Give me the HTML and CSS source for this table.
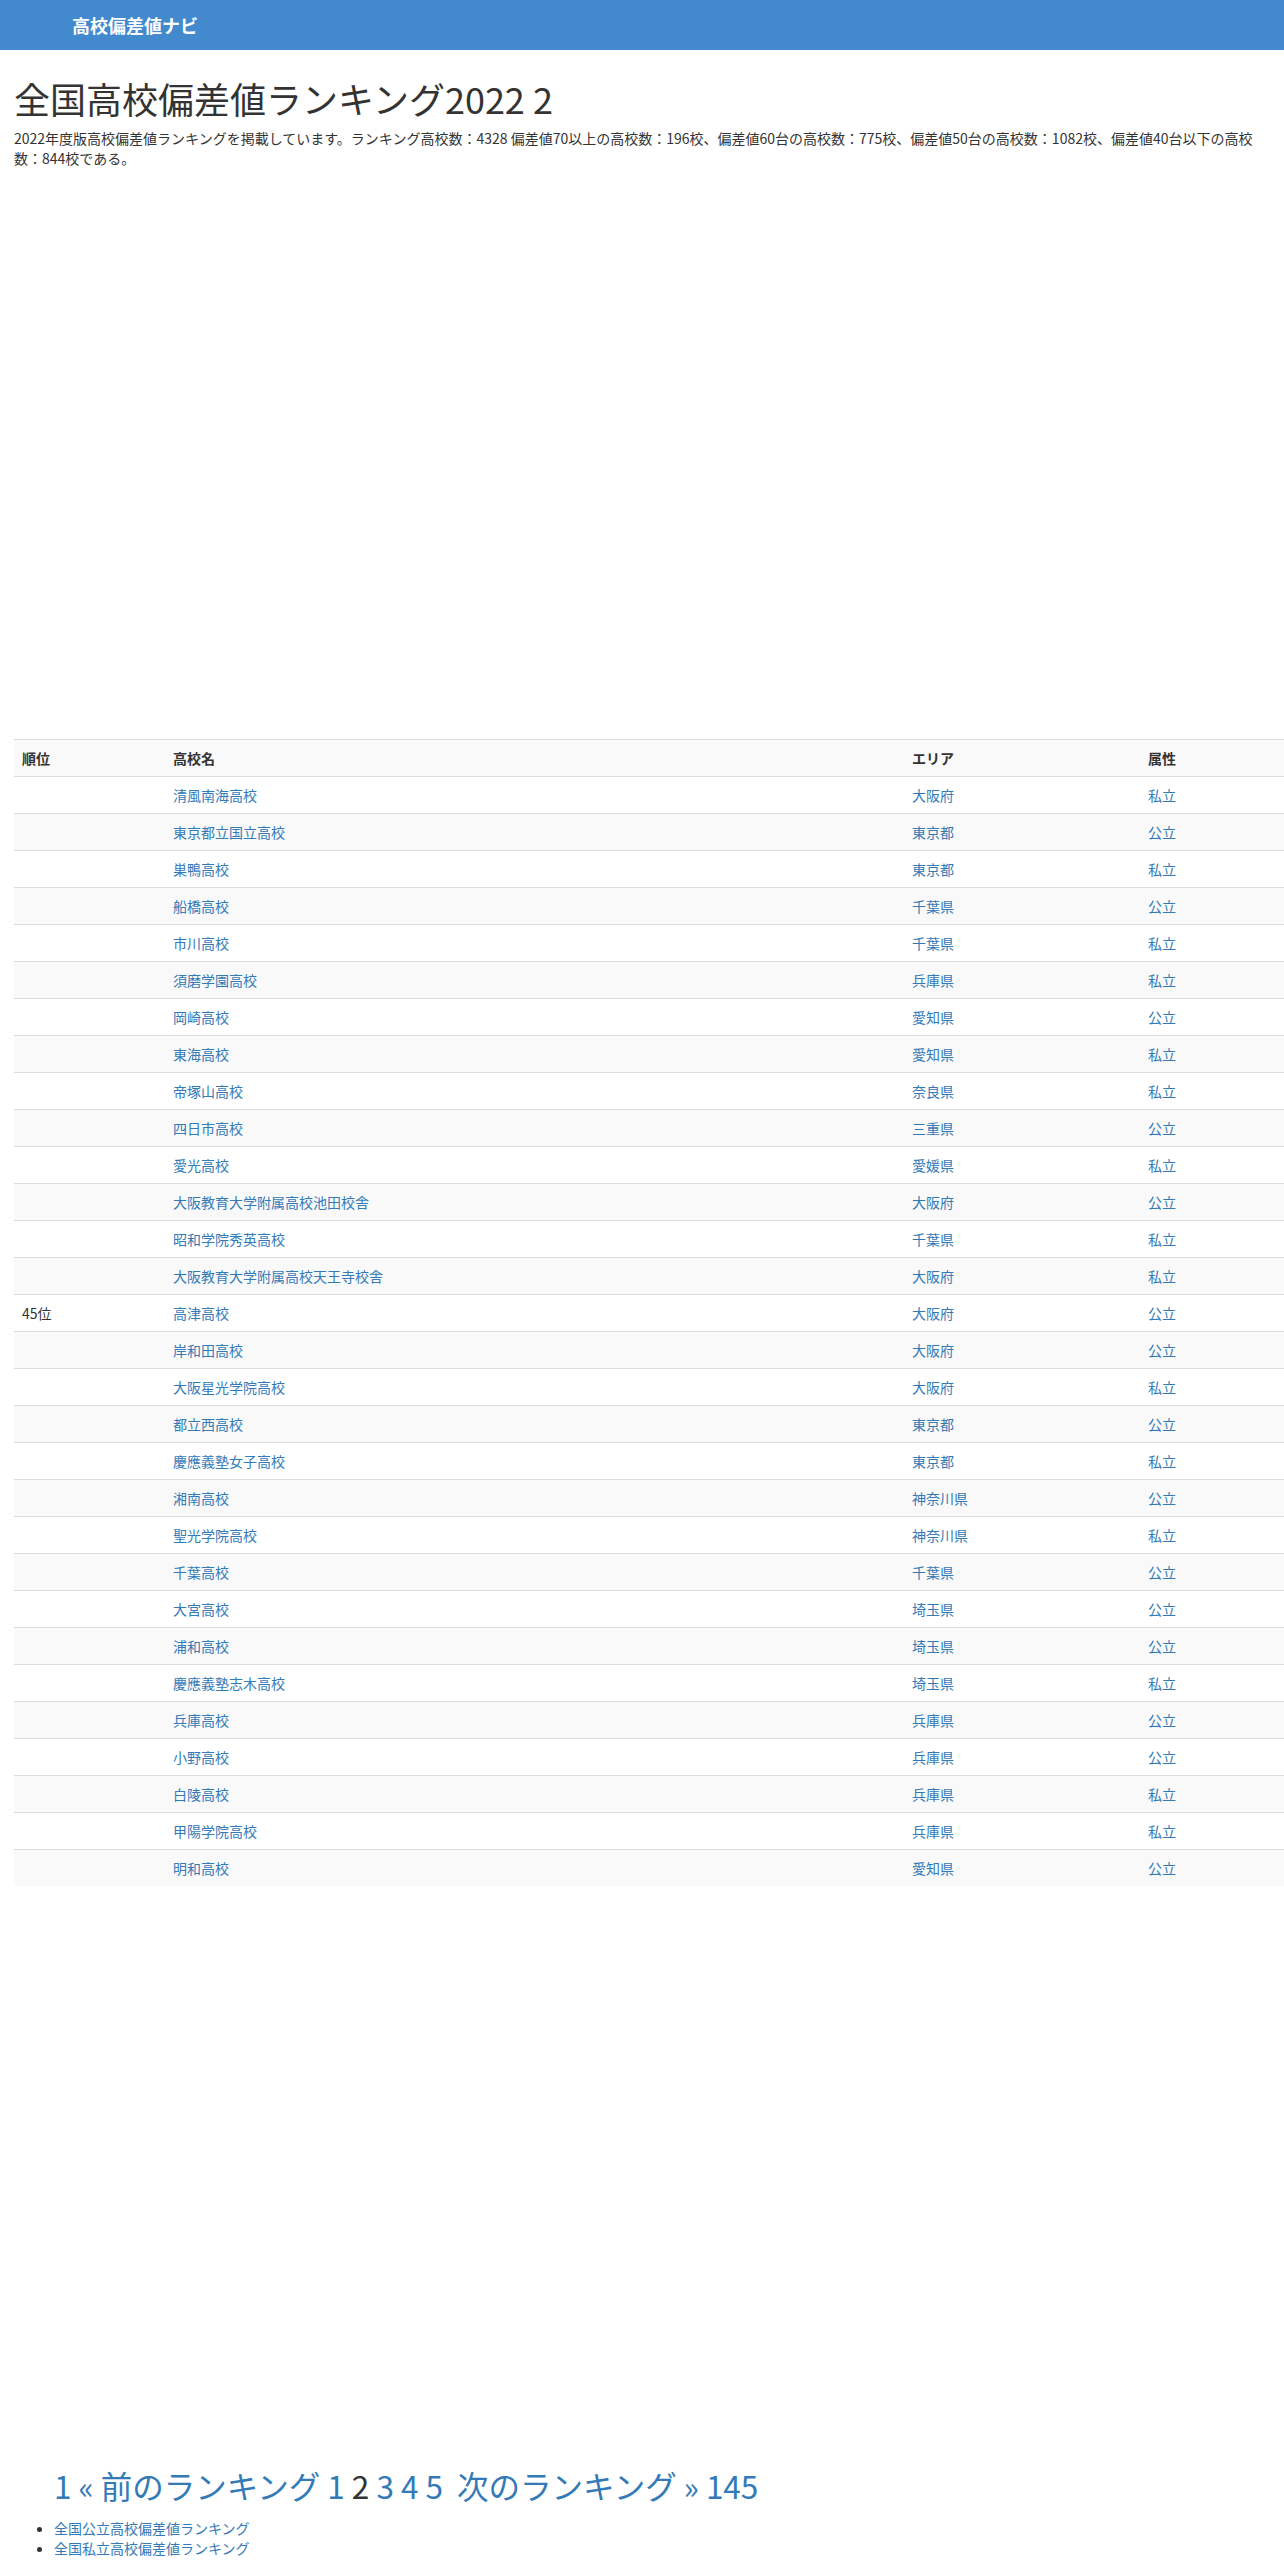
FILE: index.html
```html
<!DOCTYPE html>
<html lang="ja">
<head>
<meta charset="utf-8">
<title>全国高校偏差値ランキング2022 2</title>
<link rel="stylesheet" href="styles.css">
</head>
<body>
<header class="navbar">
  <a class="brand" href="#">高校偏差値ナビ</a>
</header>
<main class="content">
  <h1 class="title">全国高校偏差値ランキング2022 2</h1>
  <p class="lead">2022年度版高校偏差値ランキングを掲載しています。ランキング高校数：4328 偏差値70以上の高校数：196校、偏差値60台の高校数：775校、偏差値50台の高校数：1082校、偏差値40台以下の高校数：844校である。</p>
  <div class="ad ad-top"></div>
  <table class="ranking">
    <tbody>
      <tr><th class="c-rank">順位</th><th class="c-name">高校名</th><th class="c-area">エリア</th><th class="c-type">属性</th></tr>
      <tr><td></td><td><a href="#">清風南海高校</a></td><td><a href="#">大阪府</a></td><td><a href="#">私立</a></td></tr>
      <tr><td></td><td><a href="#">東京都立国立高校</a></td><td><a href="#">東京都</a></td><td><a href="#">公立</a></td></tr>
      <tr><td></td><td><a href="#">巣鴨高校</a></td><td><a href="#">東京都</a></td><td><a href="#">私立</a></td></tr>
      <tr><td></td><td><a href="#">船橋高校</a></td><td><a href="#">千葉県</a></td><td><a href="#">公立</a></td></tr>
      <tr><td></td><td><a href="#">市川高校</a></td><td><a href="#">千葉県</a></td><td><a href="#">私立</a></td></tr>
      <tr><td></td><td><a href="#">須磨学園高校</a></td><td><a href="#">兵庫県</a></td><td><a href="#">私立</a></td></tr>
      <tr><td></td><td><a href="#">岡崎高校</a></td><td><a href="#">愛知県</a></td><td><a href="#">公立</a></td></tr>
      <tr><td></td><td><a href="#">東海高校</a></td><td><a href="#">愛知県</a></td><td><a href="#">私立</a></td></tr>
      <tr><td></td><td><a href="#">帝塚山高校</a></td><td><a href="#">奈良県</a></td><td><a href="#">私立</a></td></tr>
      <tr><td></td><td><a href="#">四日市高校</a></td><td><a href="#">三重県</a></td><td><a href="#">公立</a></td></tr>
      <tr><td></td><td><a href="#">愛光高校</a></td><td><a href="#">愛媛県</a></td><td><a href="#">私立</a></td></tr>
      <tr><td></td><td><a href="#">大阪教育大学附属高校池田校舎</a></td><td><a href="#">大阪府</a></td><td><a href="#">公立</a></td></tr>
      <tr><td></td><td><a href="#">昭和学院秀英高校</a></td><td><a href="#">千葉県</a></td><td><a href="#">私立</a></td></tr>
      <tr><td></td><td><a href="#">大阪教育大学附属高校天王寺校舎</a></td><td><a href="#">大阪府</a></td><td><a href="#">私立</a></td></tr>
      <tr><td>45位</td><td><a href="#">高津高校</a></td><td><a href="#">大阪府</a></td><td><a href="#">公立</a></td></tr>
      <tr><td></td><td><a href="#">岸和田高校</a></td><td><a href="#">大阪府</a></td><td><a href="#">公立</a></td></tr>
      <tr><td></td><td><a href="#">大阪星光学院高校</a></td><td><a href="#">大阪府</a></td><td><a href="#">私立</a></td></tr>
      <tr><td></td><td><a href="#">都立西高校</a></td><td><a href="#">東京都</a></td><td><a href="#">公立</a></td></tr>
      <tr><td></td><td><a href="#">慶應義塾女子高校</a></td><td><a href="#">東京都</a></td><td><a href="#">私立</a></td></tr>
      <tr><td></td><td><a href="#">湘南高校</a></td><td><a href="#">神奈川県</a></td><td><a href="#">公立</a></td></tr>
      <tr><td></td><td><a href="#">聖光学院高校</a></td><td><a href="#">神奈川県</a></td><td><a href="#">私立</a></td></tr>
      <tr><td></td><td><a href="#">千葉高校</a></td><td><a href="#">千葉県</a></td><td><a href="#">公立</a></td></tr>
      <tr><td></td><td><a href="#">大宮高校</a></td><td><a href="#">埼玉県</a></td><td><a href="#">公立</a></td></tr>
      <tr><td></td><td><a href="#">浦和高校</a></td><td><a href="#">埼玉県</a></td><td><a href="#">公立</a></td></tr>
      <tr><td></td><td><a href="#">慶應義塾志木高校</a></td><td><a href="#">埼玉県</a></td><td><a href="#">私立</a></td></tr>
      <tr><td></td><td><a href="#">兵庫高校</a></td><td><a href="#">兵庫県</a></td><td><a href="#">公立</a></td></tr>
      <tr><td></td><td><a href="#">小野高校</a></td><td><a href="#">兵庫県</a></td><td><a href="#">公立</a></td></tr>
      <tr><td></td><td><a href="#">白陵高校</a></td><td><a href="#">兵庫県</a></td><td><a href="#">私立</a></td></tr>
      <tr><td></td><td><a href="#">甲陽学院高校</a></td><td><a href="#">兵庫県</a></td><td><a href="#">私立</a></td></tr>
      <tr><td></td><td><a href="#">明和高校</a></td><td><a href="#">愛知県</a></td><td><a href="#">公立</a></td></tr>
    </tbody>
  </table>
  <div class="ad ad-bottom"></div>
  <nav class="pager">
    <a href="#">1</a> <a href="#">« 前のランキング</a> <a href="#">1</a> <span class="current">2</span> <a href="#">3</a> <a href="#">4</a> <a href="#">5</a>&nbsp; <a href="#">次のランキング »</a> <a href="#">145</a>
  </nav>
  <ul class="links">
    <li><a href="#">全国公立高校偏差値ランキング</a></li>
    <li><a href="#">全国私立高校偏差値ランキング</a></li>
  </ul>
</main>
</body>
</html>
```
FILE: styles.css
```css
html, body {
  margin: 0;
  padding: 0;
}
body {
  font-family: "Noto Sans CJK JP", "Noto Sans", sans-serif;
  font-size: 14px;
  line-height: 20px;
  color: #333;
  background: #fff;
}
a {
  color: #337ab7;
  text-decoration: none;
}
.navbar {
  height: 50px;
  background: #4389ce;
  display: flex;
  align-items: center;
  padding-left: 72px;
}
.brand {
  color: #fff;
  font-size: 18px;
  font-weight: bold;
  line-height: 20px;
}
.content {
  padding-left: 14px;
}
.title {
  margin: 28px 0 10px;
  font-size: 36px;
  font-weight: 400;
  line-height: 40px;
}
.lead {
  margin: 0 0 10px;
  padding-right: 8px;
}
.ad-top {
  height: 561px;
}
.ranking {
  width: 1270px;
  border-collapse: collapse;
  border-spacing: 0;
}
.ranking th,
.ranking td {
  padding: 8px;
  text-align: left;
  vertical-align: top;
  border-top: 1px solid #ddd;
  line-height: 20px;
}
.ranking th {
  font-weight: bold;
}
.ranking tr:nth-of-type(odd) {
  background: #f9f9f9;
}
.c-rank { width: 135px; }
.c-name { width: 723px; }
.c-area { width: 220px; }
.ad-bottom {
  height: 582px;
}
.pager {
  padding-left: 40px;
  font-size: 31.5px;
  line-height: 34px;
  margin-bottom: 16px;
}
.pager .current {
  color: #333;
}
.links {
  margin: 0 0 10px;
  padding-left: 40px;
}
```
